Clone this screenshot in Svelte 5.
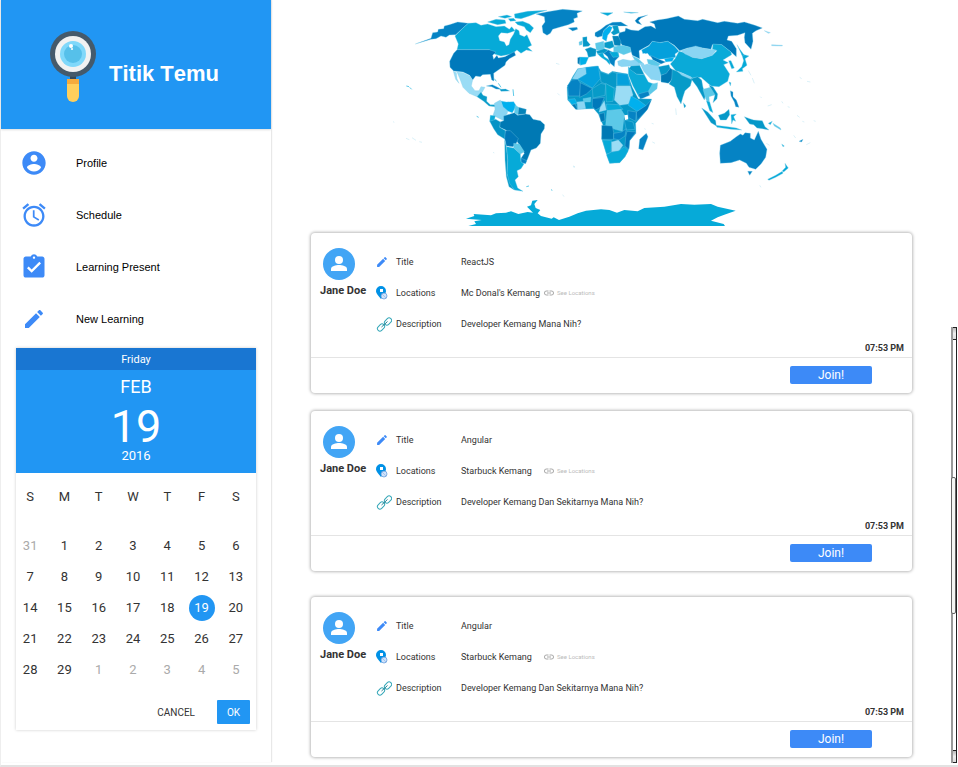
<script>
  const weekdays = ['S', 'M', 'T', 'W', 'T', 'F', 'S'];
  const weeks = [
    [31, 1, 2, 3, 4, 5, 6],
    [7, 8, 9, 10, 11, 12, 13],
    [14, 15, 16, 17, 18, 19, 20],
    [21, 22, 23, 24, 25, 26, 27],
    [28, 29, 1, 2, 3, 4, 5]
  ];
  const links = [
    { label: 'Profile', size: 28, path: 'M12 2C6.48 2 2 6.48 2 12s4.48 10 10 10 10-4.48 10-10S17.52 2 12 2zm0 3c1.66 0 3 1.34 3 3s-1.34 3-3 3-3-1.34-3-3 1.34-3 3-3zm0 14.2c-2.5 0-4.71-1.28-6-3.22.03-1.99 4-3.08 6-3.08 1.99 0 5.97 1.09 6 3.08-1.29 1.94-3.5 3.22-6 3.22z' },
    { label: 'Schedule', size: 28, path: 'M22 5.72l-4.6-3.86-1.29 1.53 4.6 3.86L22 5.72zM7.88 3.39L6.6 1.86 2 5.71l1.29 1.53 4.59-3.85zM12.5 8H11v6l4.75 2.85.75-1.23-4-2.37V8zM12 4c-4.97 0-9 4.03-9 9s4.02 9 9 9c4.97 0 9-4.03 9-9s-4.03-9-9-9zm0 16c-3.87 0-7-3.13-7-7s3.13-7 7-7 7 3.13 7 7-3.13 7-7 7z' },
    { label: 'Learning Present', size: 28, path: 'M19 3h-4.18C14.4 1.84 13.3 1 12 1c-1.3 0-2.4.84-2.82 2H5c-1.1 0-2 .9-2 2v14c0 1.1.9 2 2 2h14c1.1 0 2-.9 2-2V5c0-1.1-.9-2-2-2zm-7 0c.55 0 1 .45 1 1s-.45 1-1 1-1-.45-1-1 .45-1 1-1zm-2 14l-4-4 1.41-1.41L10 14.17l6.59-6.59L18 9l-8 8z' },
    { label: 'New Learning', size: 24, path: 'M3 17.25V21h3.75L17.81 9.94l-3.75-3.75L3 17.25zM20.71 7.04c.39-.39.39-1.02 0-1.41l-2.34-2.34c-.39-.39-1.02-.39-1.41 0l-1.83 1.83 3.75 3.75 1.83-1.83z' }
  ];
  const pencil = links[3].path;
  const events = [
    { host: 'Jane Doe', title: 'ReactJS', place: "Mc Donal's Kemang", about: 'Developer Kemang Mana Nih?', time: '07:53 PM' },
    { host: 'Jane Doe', title: 'Angular', place: 'Starbuck Kemang', about: 'Developer Kemang Dan Sekitarnya Mana Nih?', time: '07:53 PM' },
    { host: 'Jane Doe', title: 'Angular', place: 'Starbuck Kemang', about: 'Developer Kemang Dan Sekitarnya Mana Nih?', time: '07:53 PM' }
  ];
  const outside = (w, d) => (w === 0 && d > 7) || (w === 4 && d < 7);

  // Map regions as [colour, polygon points], one list for each part of the world.
  const americas = [
    ['#0583c4', '103,132 150,115 155,98 170,96 172,88 188,86 190,78 205,74 230,66 262,70 245,85 224,104 205,105 195,112 180,108 165,116 150,118'],
    ['#06aad8', '262,70 285,68 300,76 320,72 345,80 370,78 385,88 392,80 402,92 380,100 360,98 352,108 356,122 370,126 376,138 384,134 388,118 398,102 404,86 414,92 416,104 430,110 438,104 446,122 452,136 440,142 454,154 436,150 420,160 408,150 392,162 360,168 340,162 325,149 228,149 232,132 222,108 245,85'],
    ['#06aad8', '320,66 345,58 372,60 375,70 350,74'],
    ['#06aad8', '352,50 378,45 392,50 372,55'],
    ['#06aad8', '400,42 440,34 498,31 470,38 445,48 420,56 402,54'],
    ['#06aad8', '382,56 398,55 405,62 388,64'],
    ['#06aad8', '402,66 425,64 445,72 458,84 448,98 436,90 430,80 410,74'],
    ['#0583c4', '465,42 500,35 545,28 604,33 588,40 590,52 578,56 580,66 562,74 535,82 515,88 508,100 498,106 486,98 483,78 492,66 490,50'],
    ['#0583c4', '562,84 588,82 590,88 575,93'],
    ['#0079bb', '228,149 325,149 345,156 335,166 338,178 348,166 352,174 372,170 400,155 404,166 385,176 375,186 372,196 352,210 338,220 339,243 332,240 328,223 305,224 298,230 284,228 275,240 266,226 246,216 218,213 207,202 206,184 218,160'],
    ['#9adcf5', '228,216 246,218 266,228 275,240 271,258 282,272 294,272 300,260 312,262 304,276 288,290 264,280 246,262 238,240'],
    ['#9adcf5', '217,214 226,218 228,236 234,250 224,238'],
    ['#079bc8', '288,290 300,276 306,286 318,290 317,304 328,314 346,314 342,320 324,318 308,304'],
    ['#0583c4', '316,258 334,254 350,262 360,268 345,267 332,260'],
    ['#0598c8', '356,268 374,267 386,273 360,274'],
    ['#8ad5f3', '340,310 358,300 366,320 384,322 378,342 370,350 368,362 336,346 342,328'],
    ['#00b0ee', '360,303 376,306 398,305 406,318 394,338 382,334 366,320'],
    ['#5cc9e8', '402,316 413,322 411,344 400,338'],
    ['#0583b9', '413,322 436,328 434,342 411,344'],
    ['#06aad8', '328,346 343,347 340,362 326,364'],
    ['#0079b4', '368,348 400,338 410,346 434,342 446,344 456,358 478,362 491,374 490,386 480,402 478,430 466,444 450,450 440,476 434,488 418,478 430,460 416,436 402,416 374,390 356,382 356,366 368,362'],
    ['#0593c5', '326,364 344,358 358,366 356,382 374,392 372,418 350,404 338,386'],
    ['#0077b8', '373,392 388,392 412,416 406,430 396,440 376,438 371,416'],
    ['#5cc9e8', '398,430 415,432 430,455 418,462 398,444'],
    ['#0583c4', '420,474 437,482 434,491 420,488'],
    ['#06aad8', '376,440 398,444 418,462 420,486 429,492 420,506 408,512 412,530 402,540 410,564 426,574 400,570 384,552 378,520 380,480'],
    ['#079bc8', '371,420 376,440 380,480 378,520 386,550 400,570 384,560 376,530 372,480']
  ];
  const antarctica = '262,678 285,672 280,664 302,660 255,656 280,648 278,642 330,646 345,640 375,638 390,634 412,642 440,636 456,638 438,620 450,616 454,602 470,600 460,612 464,624 478,630 470,640 480,648 512,656 518,652 534,660 565,650 590,640 615,632 660,628 685,630 708,638 730,630 770,634 790,624 850,620 900,612 940,614 990,612 1010,620 1064,632 1030,644 1010,652 990,662 1028,672 1032,678';
  const oldWorld = [
    ['#0079bb', '205,98 222,94 224,84 240,90 262,92 282,80 300,78 314,86 310,72 296,66 320,60 346,56 382,48 400,58 440,62 455,58 500,68 520,64 560,70 580,66 612,76 634,84 615,92 604,100 606,124 600,148 582,128 580,112 582,98 560,106 532,108 528,120 542,124 556,146 556,170 540,156 512,134 484,134 480,148 440,142 410,144 386,152 370,136 350,124 326,128 304,124 294,136 272,148 264,152 266,176 244,166 236,142 214,136 200,118'],
    ['#0079bb', '252,62 262,52 290,45 270,54 262,62 272,74 258,70'],
    ['#06aad8', '148,38 186,38 170,47'],
    ['#06aad8', '218,36 262,38 240,40'],
    ['#0583c4', '132,98 150,88 165,76 185,67 210,66 230,78 200,78 175,76 158,92 154,108 140,112 132,108'],
    ['#00b0ee', '160,90 175,78 184,82 178,96 170,106 166,124 154,116 155,100'],
    ['#079bc8', '184,78 200,76 206,98 188,106 180,98 188,90'],
    ['#0598c8', '95,112 108,110 108,122 118,134 112,139 96,140'],
    ['#5cc9e8', '84,126 94,122 93,134 85,136'],
    ['#0593c5', '102,148 118,142 136,148 134,168 112,172 108,156'],
    ['#00b0e8', '84,171 113,172 104,192 88,196'],
    ['#0079b4', '80,173 87,172 86,194 80,190'],
    ['#5cc9e8', '133,130 158,124 160,148 150,154 136,150'],
    ['#079bc8', '160,128 184,122 190,140 176,146 160,142'],
    ['#0583b9', '184,108 202,108 210,126 208,138 190,136'],
    ['#0598c8', '136,154 160,146 172,150 160,160 140,162'],
    ['#5cc9e8', '188,140 214,136 238,142 240,156 218,164 204,158 188,156'],
    ['#06aad8', '140,162 155,158 160,170 178,182 176,194 166,182 150,172'],
    ['#0583c4', '158,160 172,150 184,156 202,158 204,170 192,182 190,200 178,190 170,170'],
    ['#06aad8', '176,156 200,156 204,170 186,172'],
    ['#8ad5f3', '200,184 216,178 240,182 258,178 268,194 240,198 212,200 202,196'],
    ['#5cc9e8', '244,168 262,176 276,190 264,190 250,178'],
    ['#04a0dc', '272,150 294,138 304,124 328,128 350,124 370,138 384,154 372,162 374,172 346,176 322,178 296,168 290,160 276,162'],
    ['#0079bb', '298,166 320,176 344,186 330,192 306,180'],
    ['#5cc9e8', '288,178 306,180 328,192 318,202 292,192'],
    ['#00b0ee', '340,176 370,172 364,184 344,186'],
    ['#0aaad8', '384,154 402,158 424,172 452,176 484,166 498,152 484,148 486,132 512,134 540,156 542,164 516,180 532,188 518,194 536,222 530,244 504,260 480,258 450,232 424,234 396,220 374,212 358,192 372,176'],
    ['#8ad5f3', '390,152 412,144 434,138 462,146 496,150 484,166 452,176 424,172 402,162'],
    ['#8ad5f3', '266,188 280,190 296,194 322,198 330,222 328,242 300,238 278,214'],
    ['#0598c8', '322,200 354,194 358,206 346,222 330,226'],
    ['#0079b4', '330,226 346,220 358,204 370,214 362,240 352,250 330,246'],
    ['#079bc8', '364,208 378,214 396,224 424,236 418,258 402,272 396,290 390,312 378,290 370,262 354,252 362,238'],
    ['#079bc8', '397,308 405,318 400,324'],
    ['#8ad5f3', '380,214 420,230 420,238 392,226'],
    ['#0aaad8', '232,200 256,222 280,224 292,246 318,256 306,272 282,282 264,292 246,258 232,224'],
    ['#0598c8', '240,198 266,196 280,224 256,222 234,206'],
    ['#5cc9e8', '304,252 320,248 318,266 296,284 292,274'],
    ['#0583c4', '262,282 292,274 296,286 268,298'],
    ['#0598c8', '80,206 140,198 150,214 172,222 184,214 230,222 244,262 262,296 302,297 286,332 254,370 255,400 236,422 234,446 222,470 206,488 176,490 166,460 152,416 156,376 142,342 128,326 75,328 50,300 48,262 66,228'],
    ['#8ad5f3', '80,208 104,202 106,222 80,238 64,236'],
    ['#04a0dc', '104,202 142,198 148,236 124,264 80,238 106,222'],
    ['#0598c8', '146,214 172,224 184,216 198,220 196,266 150,246'],
    ['#04a0dc', '198,220 230,222 238,256 198,256'],
    ['#0583c4', '50,256 62,240 80,238 90,252 86,288 52,288'],
    ['#0079bb', '88,248 124,266 106,282 86,292'],
    ['#079bc8', '124,266 150,250 164,254 162,286 126,294'],
    ['#00a5cc', '164,250 190,266 186,304 166,306'],
    ['#9adcf5', '196,258 238,258 246,284 232,312 206,316 190,300'],
    ['#0079bb', '124,296 160,292 148,322 134,330 124,320'],
    ['#00b0e8', '52,298 72,296 78,310 62,314'],
    ['#0079b4', '62,314 72,312 80,328 74,328'],
    ['#8ad5f3', '78,306 100,304 104,326 80,328'],
    ['#5cc9e8', '96,296 120,292 118,306 98,306'],
    ['#9adcf5', '148,322 160,302 166,330 144,336'],
    ['#06aad8', '166,312 202,314 216,328 168,332'],
    ['#00b0ee', '240,288 262,300 286,318 258,334 232,316'],
    ['#0079bb', '286,316 302,298 290,328 258,362 256,336'],
    ['#0583c4', '230,332 256,336 254,364 232,352'],
    ['#0079b4', '144,342 160,338 162,362 150,366'],
    ['#5cc9e8', '168,332 210,328 220,344 214,394 192,388 164,376'],
    ['#0593c5', '220,360 246,366 252,388 226,390'],
    ['#0079b4', '152,376 184,378 188,398 188,418 152,418'],
    ['#0583c4', '188,400 212,396 226,386 222,408 204,420 188,416'],
    ['#0079bb', '228,394 255,396 236,422 234,448 222,438 224,412'],
    ['#06aad8', '154,420 182,422 180,458 166,462'],
    ['#9adcf5', '182,426 202,420 216,436 204,452 182,456'],
    ['#06aad8', '166,464 182,456 204,452 220,440 232,452 222,470 206,488 176,490'],
    ['#0583c4', '266,418 286,400 291,410 276,450 263,446']
  ];
  const pacific = [
    ['#06aad8', '182,162 204,168 192,176 198,196 184,206 186,214 166,216 182,200 188,182'],
    ['#06aad8', '143,182 150,182 160,204 152,206'],
    ['#06aad8', '168,134 174,144 190,166 184,168'],
    ['#0583c4', '148,272 156,276 156,290 166,300 174,322 164,320 160,306 150,288'],
    ['#06aad8', '144,246 150,248 148,258'],
    ['#0598c8', '30,236 50,230 62,240 66,262 74,284 70,300 58,278 48,260'],
    ['#5cc9e8', '66,268 88,262 104,284 84,290 86,318 74,296'],
    ['#0598c8', '84,256 96,260 110,282 108,296 96,308 102,284'],
    ['#06aad8', '76,302 86,306 96,338 86,332'],
    ['#0598c8', '62,324 80,336 104,362 106,378 90,368'],
    ['#06aad8', '104,376 140,380 166,384 182,390 150,388 108,382'],
    ['#0598c8', '112,346 130,340 144,328 146,344 136,360 118,360'],
    ['#06aad8', '150,344 166,342 158,350 164,364 156,360 152,372'],
    ['#0598c8', '190,350 206,356 218,360 244,362 252,380 264,390 244,386 228,384 218,374 206,372'],
    ['#0583c4', '118,436 148,424 166,410 178,402 186,406 192,398 208,400 208,414 220,420 232,394 240,418 258,448 254,472 240,492 224,508 204,502 196,490 176,480 150,488 118,490 116,460'],
    ['#0583c4', '200,514 214,514 206,526'],
    ['#06aad8', '260,538 284,526 304,514 306,520 284,532 264,541'],
    ['#06aad8', '312,490 322,504 308,516 304,512 314,502'],
    ['#06aad8', '262,370 274,364 268,374'],
    ['#5cc9e8', '276,370 298,384 300,390 280,378'],
    ['#06aad8', '302,432 310,438 306,440'],
    ['#0583c4', '354,424 366,418 362,426'],
    ['#8ad5f3', '250,92 268,98 262,100'],
    ['#8ad5f3', '272,134 304,136 304,138 272,137']
  ];
</script>

<div class="page">
  <aside class="sidebar">
    <header class="brand">
      <svg width="46" height="72" viewBox="0 0 46 72" aria-hidden="true">
        <rect x="20" y="44" width="6" height="6" fill="#36495a" />
        <circle cx="23" cy="23" r="23" fill="#455a6b" />
        <circle cx="23" cy="23" r="18" fill="#f1f2f2" />
        <circle cx="23" cy="23" r="13" fill="#80d8fa" />
        <circle cx="23" cy="23" r="9" fill="#56c0ea" />
        <circle cx="21" cy="15" r="2" fill="#fff" />
        <circle cx="22" cy="18" r="1" fill="#fff" />
        <path d="M17 49h12v16a6 6 0 0 1-12 0z" fill="#ffcf5c" />
        <path d="M17 48h12v5H17z" fill="#f6ab3c" />
      </svg>
      <h1>Titik Temu</h1>
    </header>

    <nav>
      {#each links as link}
        <a href="#{link.label.toLowerCase().replace(' ', '-')}">
          <span class="nav-icon">
            <svg width={link.size} height={link.size} viewBox="0 0 24 24" aria-hidden="true"><path d={link.path} /></svg>
          </span>
          {link.label}
        </a>
      {/each}
    </nav>

    <section class="calendar">
      <div class="weekday">Friday</div>
      <div class="date">
        <span class="month">FEB</span>
        <span class="day">19</span>
        <span class="year">2016</span>
      </div>
      <table>
        <thead>
          <tr>{#each weekdays as d}<th scope="col">{d}</th>{/each}</tr>
        </thead>
        <tbody>
          {#each weeks as week, w}
            <tr>
              {#each week as d}
                <td><button class="pick" class:muted={outside(w, d)} class:selected={d === 19}>{d}</button></td>
              {/each}
            </tr>
          {/each}
        </tbody>
      </table>
      <div class="actions">
        <button class="cancel">CANCEL</button>
        <button class="ok">OK</button>
      </div>
    </section>
  </aside>

  <main>
    <div class="map">
      <svg width="440" height="227" viewBox="391 0 440 227" role="img" aria-label="World map">
        <g stroke="#7fcdea" stroke-width="1" stroke-linejoin="round">
          <g transform="translate(380 0) scale(0.33333)">
            {#each americas as [fill, points]}<polygon {fill} {points} />{/each}
            <polygon fill="#06aad8" stroke="none" points={antarctica} />
            <path d="M340 236l6 8m6 6l8 12M76 258l8 2m2 2l6 6M287 349l6 3M396 268l2 20M436 560l8-2M510 569l4 2" fill="none" stroke="#5cc9e8" stroke-width="3" />
            <path d="M36 365l4 2M12 384l4 2M75 415l10 4m8-6l12 8m10 4l8 2M525 190l10 3M530 280l6 6M576 500l6 2M545 584l4 6M336 457l4 2" fill="none" stroke="#c8eaf5" stroke-width="2" />
          </g>
          <g transform="translate(550 0) scale(0.33333)">
            {#each oldWorld as [fill, points]}<polygon {fill} {points} />{/each}
            <path d="M268 164l12-4 8 8-6 8 6 16-8 2-6-14-6-8z" fill="#fff" stroke="none" />
            <path d="M220 346l10-2 2 14-10 2z" fill="#fff" stroke="none" />
            <path d="M280 386l4 2m18-18l6 2m-4 54l8 4M374 325l2 20M66 498l6 2" fill="none" stroke="#c8eaf5" stroke-width="2" />
          </g>
          <g transform="translate(680 0) scale(0.33333)">
            {#each pacific as [fill, points]}<polygon {fill} {points} />{/each}
            <path d="M202 212l8 14m4 8l6 16M238 290l4 4m18 24l12-4m30-10l4 6m14 10l6 2m22 24l8 6m8 12l6 2M256 430l10 6m72-30l6 8m44 14l-12 6M356 232l6 4m16 8l10 2m10 116l6 2m-168 192l4 6" fill="none" stroke="#c8eaf5" stroke-width="2" />
          </g>
        </g>
      </svg>
    </div>

    <div class="cards">
      {#each events as event}
        <article class="card">
          <div class="details">
            <div class="host">
              <svg class="avatar" width="32" height="32" viewBox="0 0 32 32" aria-hidden="true">
                <circle cx="16" cy="16" r="16" fill="#42a5f5" />
                <circle cx="16" cy="12" r="4" fill="#fff" />
                <path d="M8 23v-2c0-3 5-4 8-4s8 1 8 4v2z" fill="#fff" />
              </svg>
              <strong>{event.host}</strong>
            </div>
            <dl>
              <div class="row">
                <dt>
                  <svg width="12" height="12" viewBox="1 2 22 20" aria-hidden="true"><path d={pencil} fill="#3d8af7" /></svg>
                  Title
                </dt>
                <dd>{event.title}</dd>
              </div>
              <div class="row">
                <dt>
                  <svg width="12" height="14" viewBox="0 0 12 14" aria-hidden="true">
                    <path d="M5 0a5 5 0 0 1 5 5c0 3-3 5-5 8C3 10 0 8 0 5a5 5 0 0 1 5-5z" fill="#0091e6" />
                    <rect x="4" y="3" width="3" height="3" fill="#fff" />
                    <circle cx="8" cy="10" r="3" fill="#cfe3fb" stroke="#5a93d8" stroke-width="0.7" />
                    <path d="M6 8l4 4" stroke="#8fb5e6" stroke-width="0.7" />
                  </svg>
                  Locations
                </dt>
                <dd>
                  <span class="place">{event.place}</span>
                  <a class="see" href="#locations">
                    <svg width="12" height="12" viewBox="0 0 24 24" aria-hidden="true"><path d="M3.9 12c0-1.71 1.39-3.1 3.1-3.1h4V7H7c-2.76 0-5 2.24-5 5s2.24 5 5 5h4v-1.9H7c-1.71 0-3.1-1.39-3.1-3.1zM8 13h8v-2H8v2zm9-6h-4v1.9h4c1.71 0 3.1 1.39 3.1 3.1s-1.39 3.1-3.1 3.1h-4V17h4c2.76 0 5-2.24 5-5s-2.24-5-5-5z" fill="#aaa" /></svg>
                    See Locations
                  </a>
                </dd>
              </div>
              <div class="row">
                <dt>
                  <svg class="chain" width="16" height="16" viewBox="0 0 16 16" aria-hidden="true">
                    <g fill="none" stroke="#35a7b8" stroke-width="1">
                      <rect x="8" y="3" width="8" height="5" rx="2.5" transform="rotate(-45 12 5.5)" />
                      <rect x="1" y="9" width="8" height="5" rx="2.5" transform="rotate(-45 5 11.5)" />
                      <path d="M5.5 11l6-5.5" stroke="#2a7f90" />
                    </g>
                  </svg>
                  Description
                </dt>
                <dd>{event.about}</dd>
              </div>
            </dl>
          </div>
          <time>{event.time}</time>
          <footer><button class="join">Join!</button></footer>
        </article>
      {/each}
    </div>
  </main>

  <div class="rail" aria-hidden="true">
    <span class="cap"></span>
    <span class="thumb"></span>
    <span class="cap"></span>
  </div>
</div>

<style>
  :global(body) {
    background: #fff;
  }
  .page, .page * {
    box-sizing: border-box;
  }
  .page {
    display: flex;
    border-left: 1px solid #eee;
    border-bottom: 2px solid #e2e2e2;
    font-family: Roboto, "Liberation Sans", sans-serif;
    color: #333;
  }
  svg {
    display: block;
    flex: none;
  }
  button {
    border: 0;
    padding: 0;
    background: none;
    font-family: inherit;
    color: inherit;
  }
  a {
    color: inherit;
    text-decoration: none;
  }

  .sidebar {
    flex: 0 0 270px;
    margin-bottom: 3px;
    box-shadow: 1px 0 1px #e8e8e8;
  }
  .brand {
    display: flex;
    gap: 13px;
    height: 129px;
    padding: 31px 0 0 49px;
    background: #2196f3;
    box-shadow: 0 1px 2px #ddd;
  }
  h1 {
    margin: 0;
    padding-top: 30px;
    font: bold 22px/26px "Liberation Sans", Arial, sans-serif;
    font-kerning: none;
    color: #fff;
  }
  nav {
    padding: 8px 0 3px 19px;
  }
  nav a {
    display: flex;
    align-items: center;
    height: 52px;
    font: 11px/14px "Liberation Sans", Arial, sans-serif;
    color: #000;
  }
  .nav-icon {
    display: flex;
    justify-content: center;
    width: 28px;
    margin-right: 28px;
  }
  .nav-icon svg {
    fill: #3d8af7;
  }

  .calendar {
    margin: 0 15px 32px;
    background: #fff;
    box-shadow: 0 0 3px #ccc;
  }
  .weekday {
    height: 22px;
    background: #1976d2;
    color: #fff;
    font-size: 11px;
    line-height: 24px;
    text-align: center;
  }
  .date {
    display: flex;
    flex-direction: column;
    align-items: center;
    height: 103px;
    padding-top: 6px;
    background: #2196f3;
    color: #fff;
  }
  .month {
    margin-bottom: 7px;
    font-size: 18px;
    line-height: 22px;
  }
  .day {
    font-size: 45px;
    line-height: 44px;
  }
  .year {
    font-size: 13px;
    line-height: 14px;
  }
  table {
    width: 100%;
    margin-left: -3px;
    border-collapse: collapse;
    table-layout: fixed;
    font-size: 13px;
    line-height: 15px;
  }
  th {
    height: 57px;
    padding: 0 0 10px;
    font-weight: 400;
  }
  td {
    height: 31px;
    padding: 0;
  }
  .pick {
    display: block;
    width: 26px;
    height: 26px;
    margin: 0 auto;
    border-radius: 50%;
    font-size: 13px;
    line-height: 26px;
  }
  .muted {
    color: #aaa;
  }
  .selected {
    background: #2196f3;
    color: #fff;
  }
  .actions {
    display: flex;
    justify-content: flex-end;
    align-items: center;
    gap: 22px;
    padding: 15px 6px 6px;
  }
  .actions button {
    height: 24px;
    font-size: 10px;
    line-height: 26px;
  }
  .ok {
    width: 33px;
    border-radius: 1px;
    background: #2196f3;
    color: #fff;
  }

  main {
    flex: 1;
    min-width: 0;
    padding: 0 39px 8px 40px;
  }
  .map {
    display: flex;
    justify-content: center;
    padding-bottom: 6px;
  }
  .cards {
    display: flex;
    flex-direction: column;
    gap: 18px;
  }
  .card {
    height: 160px;
    border-radius: 4px;
    background: #fff;
    box-shadow: 0 0 3px 1px #bbb;
  }
  .card:last-child {
    margin-top: 8px;
  }
  .details {
    display: flex;
    height: 109px;
  }
  .host {
    flex: 0 0 65px;
    padding: 15px 0 0 9px;
  }
  .avatar {
    margin-left: 3px;
  }
  .host strong {
    display: block;
    margin-top: 4px;
    font-size: 11px;
    line-height: 14px;
    white-space: nowrap;
  }
  dl {
    flex: 1;
    margin: 0;
    padding-top: 13px;
    font-size: 9px;
    line-height: 12px;
  }
  .row {
    display: flex;
    align-items: center;
    height: 31px;
  }
  dt {
    display: flex;
    align-items: center;
    flex: 0 0 85px;
  }
  dt svg {
    margin-right: 8px;
  }
  .chain {
    margin-right: 4px;
  }
  dd {
    display: flex;
    align-items: center;
    margin: 0;
  }
  .place {
    width: 82px;
  }
  .see {
    display: flex;
    align-items: center;
    gap: 2px;
    font-size: 6px;
    color: #bbb;
  }
  time {
    display: block;
    height: 16px;
    padding-right: 8px;
    border-bottom: 1px solid #e4e4e4;
    font-size: 9px;
    font-weight: 700;
    line-height: 12px;
    text-align: right;
  }
  footer {
    display: flex;
    justify-content: flex-end;
    padding: 8px 40px 0 0;
  }
  .join {
    width: 82px;
    height: 18px;
    border-radius: 2px;
    background: #3d8af7;
    color: #fff;
    font-size: 12px;
    line-height: 19px;
  }

  .rail {
    display: flex;
    flex: 0 0 6px;
    flex-direction: column;
    justify-content: space-between;
    align-self: flex-end;
    height: 436px;
    margin: 0 1px 2px 0;
    border-left: 2px solid #999;
    border-right: 1px solid #222;
  }
  .cap {
    height: 13px;
    border: solid #222;
    border-width: 1px 0;
    background: linear-gradient(#bbb, #eee 50%, #ddd);
  }
  .thumb {
    height: 137px;
    margin-left: -2px;
    border: 1px solid #666;
    border-radius: 2px;
    background: #f3f5f3;
  }
</style>
